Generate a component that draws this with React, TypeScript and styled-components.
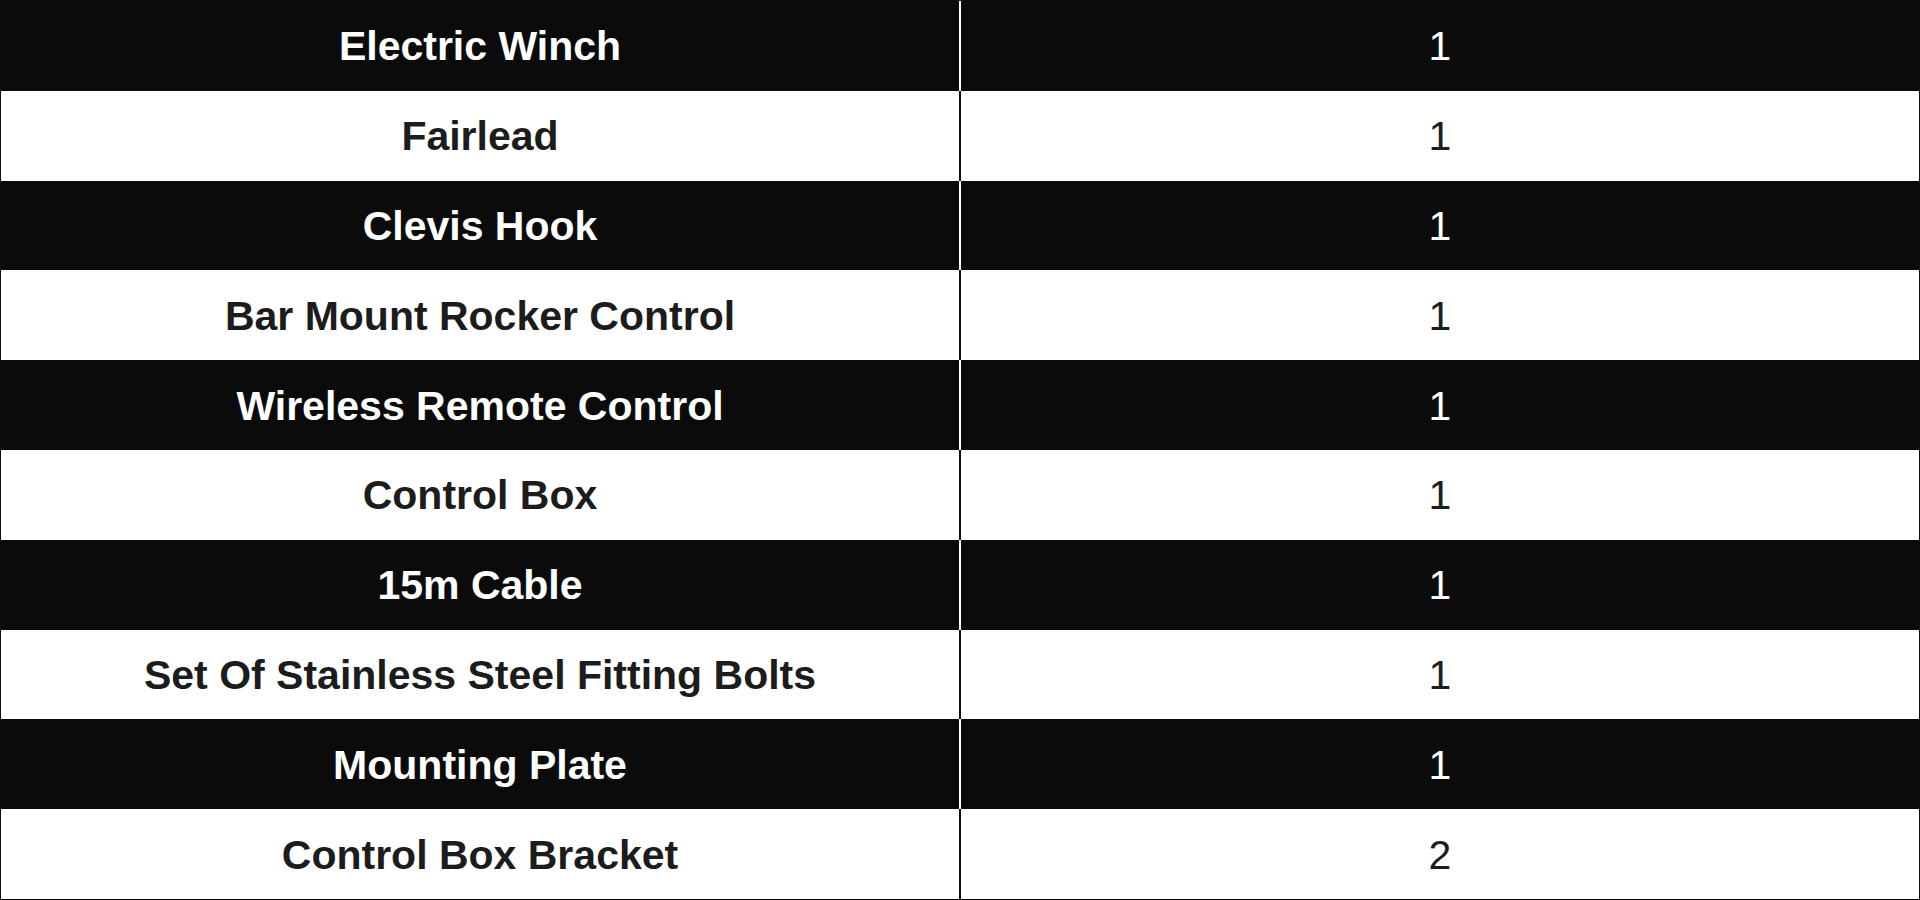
import styled, { createGlobalStyle } from 'styled-components';

const GlobalStyle = createGlobalStyle`
  * {
    box-sizing: border-box;
  }
  body {
    margin: 0;
    background-color: #ffffff;
    font-family: 'Liberation Sans', Arial, sans-serif;
  }
`;

const Table = styled.div`
  width: 1920px;
  height: 900px;
  display: flex;
  flex-direction: column;
  border: 1px solid #0a0b0a;
`;
const Row = styled.div<{ $dark: boolean }>`
  flex: 1;
  display: grid;
  grid-template-columns: 958px 1fr;
  background-color: ${(props) => (props.$dark ? '#0a0b0a' : '#ffffff')};
  color: ${(props) => (props.$dark ? '#ffffff' : '#1c1c1c')};
  --line: ${(props) => (props.$dark ? '#ffffff' : '#0a0b0a')};
`;
const Item = styled.div`
  display: flex;
  align-items: center;
  justify-content: center;
  padding-top: 2px;
  font-size: 41px;
  font-weight: 700;
`;
const Qty = styled.div`
  display: flex;
  align-items: center;
  justify-content: center;
  padding-top: 2px;
  font-size: 41px;
  border-left: 2px solid var(--line);
`;

const parts = [
  { name: 'Electric Winch', qty: 1 },
  { name: 'Fairlead', qty: 1 },
  { name: 'Clevis Hook', qty: 1 },
  { name: 'Bar Mount Rocker Control', qty: 1 },
  { name: 'Wireless Remote Control', qty: 1 },
  { name: 'Control Box', qty: 1 },
  { name: '15m Cable', qty: 1 },
  { name: 'Set Of Stainless Steel Fitting Bolts', qty: 1 },
  { name: 'Mounting Plate', qty: 1 },
  { name: 'Control Box Bracket', qty: 2 },
];

export default function App() {
  return (
    <>
      <GlobalStyle />
      <Table>
        {parts.map((part, i) => (
          <Row key={part.name} $dark={i % 2 === 0}>
            <Item>{part.name}</Item>
            <Qty>{part.qty}</Qty>
          </Row>
        ))}
      </Table>
    </>
  );
}
